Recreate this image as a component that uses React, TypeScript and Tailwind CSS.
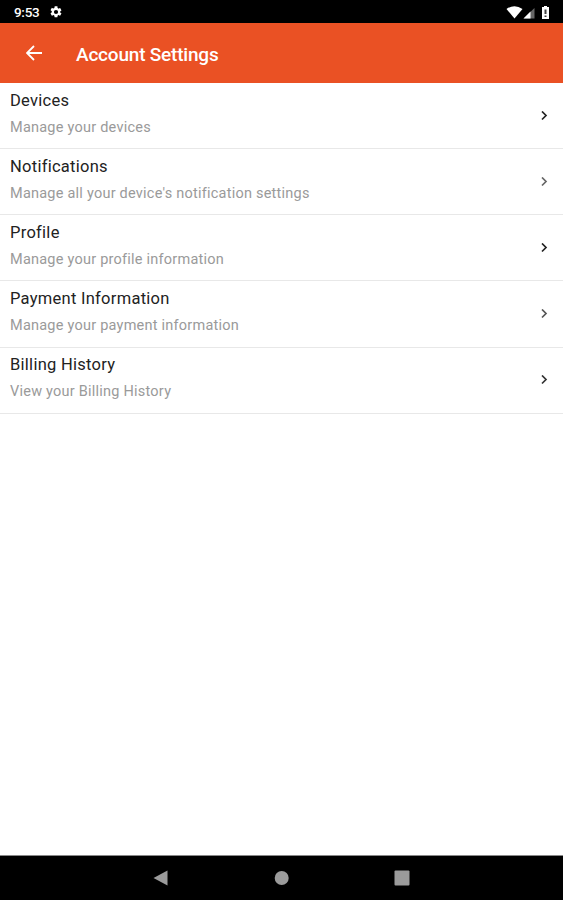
const rows = [
  { title: 'Devices', detail: 'Manage your devices', box: 'h-[66px]', pad: 'pt-[6px]', arrow: '#222' },
  { title: 'Notifications', detail: "Manage all your device's notification settings", box: 'h-[66px]', pad: 'pt-[6px]', arrow: '#666' },
  { title: 'Profile', detail: 'Manage your profile information', box: 'h-[66px]', pad: 'pt-[6px]', arrow: '#222' },
  { title: 'Payment Information', detail: 'Manage your payment information', box: 'h-[67px]', pad: 'pt-[6px]', arrow: '#555' },
  { title: 'Billing History', detail: 'View your Billing History', box: 'h-[66px] pb-px', pad: 'pt-[5px]', arrow: '#333' },
];

export default function App() {
  return (
    <div className="flex h-[900px] w-[563px] flex-col bg-white font-[Roboto,sans-serif]">
      <div className="flex h-[23px] items-center bg-black pl-[14px] pr-[12px] text-white">
        <span className="text-[13.5px] font-medium leading-[20px] tracking-[-0.3px]">9:53</span>
        <svg className="ml-[10px]" width="14" height="14" viewBox="0 0 24 24" fill="#fff">
          <path d="M19.14 12.94c.04-.3.06-.61.06-.94s-.02-.64-.07-.94l2.03-1.58a.49.49 0 0 0 .12-.61l-1.92-3.32a.49.49 0 0 0-.59-.22l-2.39.96c-.5-.38-1.03-.7-1.62-.94l-.36-2.54A.48.48 0 0 0 13.92 2h-3.84a.48.48 0 0 0-.47.41l-.36 2.54c-.59.24-1.13.57-1.62.94l-2.39-.96a.49.49 0 0 0-.59.22L2.73 8.47a.49.49 0 0 0 .12.61l2.03 1.58c-.05.3-.09.63-.09.94s.02.64.07.94l-2.03 1.58a.49.49 0 0 0-.12.61l1.92 3.32c.12.22.37.29.59.22l2.39-.96c.5.38 1.03.7 1.62.94l.36 2.54c.05.24.24.41.48.41h3.84c.24 0 .44-.17.47-.41l.36-2.54c.59-.24 1.13-.56 1.62-.94l2.39.96c.22.08.47 0 .59-.22l1.92-3.32a.49.49 0 0 0-.12-.61zM12 15.6A3.6 3.6 0 1 1 12 8.4a3.6 3.6 0 0 1 0 7.2" />
        </svg>
        <svg className="ml-auto" width="45" height="16" viewBox="0 0 45 16" fill="#fff">
          <path d="M.5 5Q8.500-.5 16.500 5L8.500 14.500Z" />
          <path d="M28.500 4V14.500H17.500Z" fill="#666" />
          <path d="M24.500 7.500V14.500H17.500Z" />
          <path d="M36 3h2V2h3v1h2v12h-7Z" />
          <path d="M38.500 5.500h2v4.500h-2zM38.500 11.500h2v1.500h-2z" fill="#444" />
        </svg>
      </div>
      <header className="flex h-[60px] items-center bg-[#ea5124] pl-[26px] text-white">
        <svg className="-mt-px" width="16" height="16" viewBox="0 0 16 16" fill="none" stroke="#fff" strokeWidth="1.8">
          <path d="M16 8H1.500M8 1L1 8l7 7" />
        </svg>
        <h1 className="ml-[34px] pt-[3px] text-[19px] font-medium leading-[23px] tracking-[-0.2px]">Account Settings</h1>
      </header>
      <main className="flex-1">
        {rows.map((row) => (
          <div key={row.title} className={`${row.box} flex items-center justify-between border-b border-[#e8e8e8] pl-[10px] pr-[15px]`}>
            <div className={`${row.pad} h-full`}>
              <div className="text-[16.5px] leading-[24px] tracking-[0.27px] text-[#222]">{row.title}</div>
              <div className="mt-[3px] text-[14.5px] leading-[24px] tracking-[0.23px] text-[#9a9a9a]">{row.detail}</div>
            </div>
            <svg width="8" height="10" viewBox="0 0 8 10" fill="none" stroke={row.arrow} strokeWidth="1.7">
              <path d="M2 .5l4 4-4 4" />
            </svg>
          </div>
        ))}
      </main>
      <nav className="flex h-[45px] items-center border-t border-[#888] bg-black pl-[153px]">
        <svg width="258" height="18" viewBox="0 0 258 18" fill="#9b9b9b">
          <path d="M.5 9L14.500 1.500V16.500Z" />
          <circle cx="128.700" cy="9" r="7" />
          <rect x="241.500" y="1.500" width="15" height="15" rx="1" />
        </svg>
      </nav>
    </div>
  );
}
